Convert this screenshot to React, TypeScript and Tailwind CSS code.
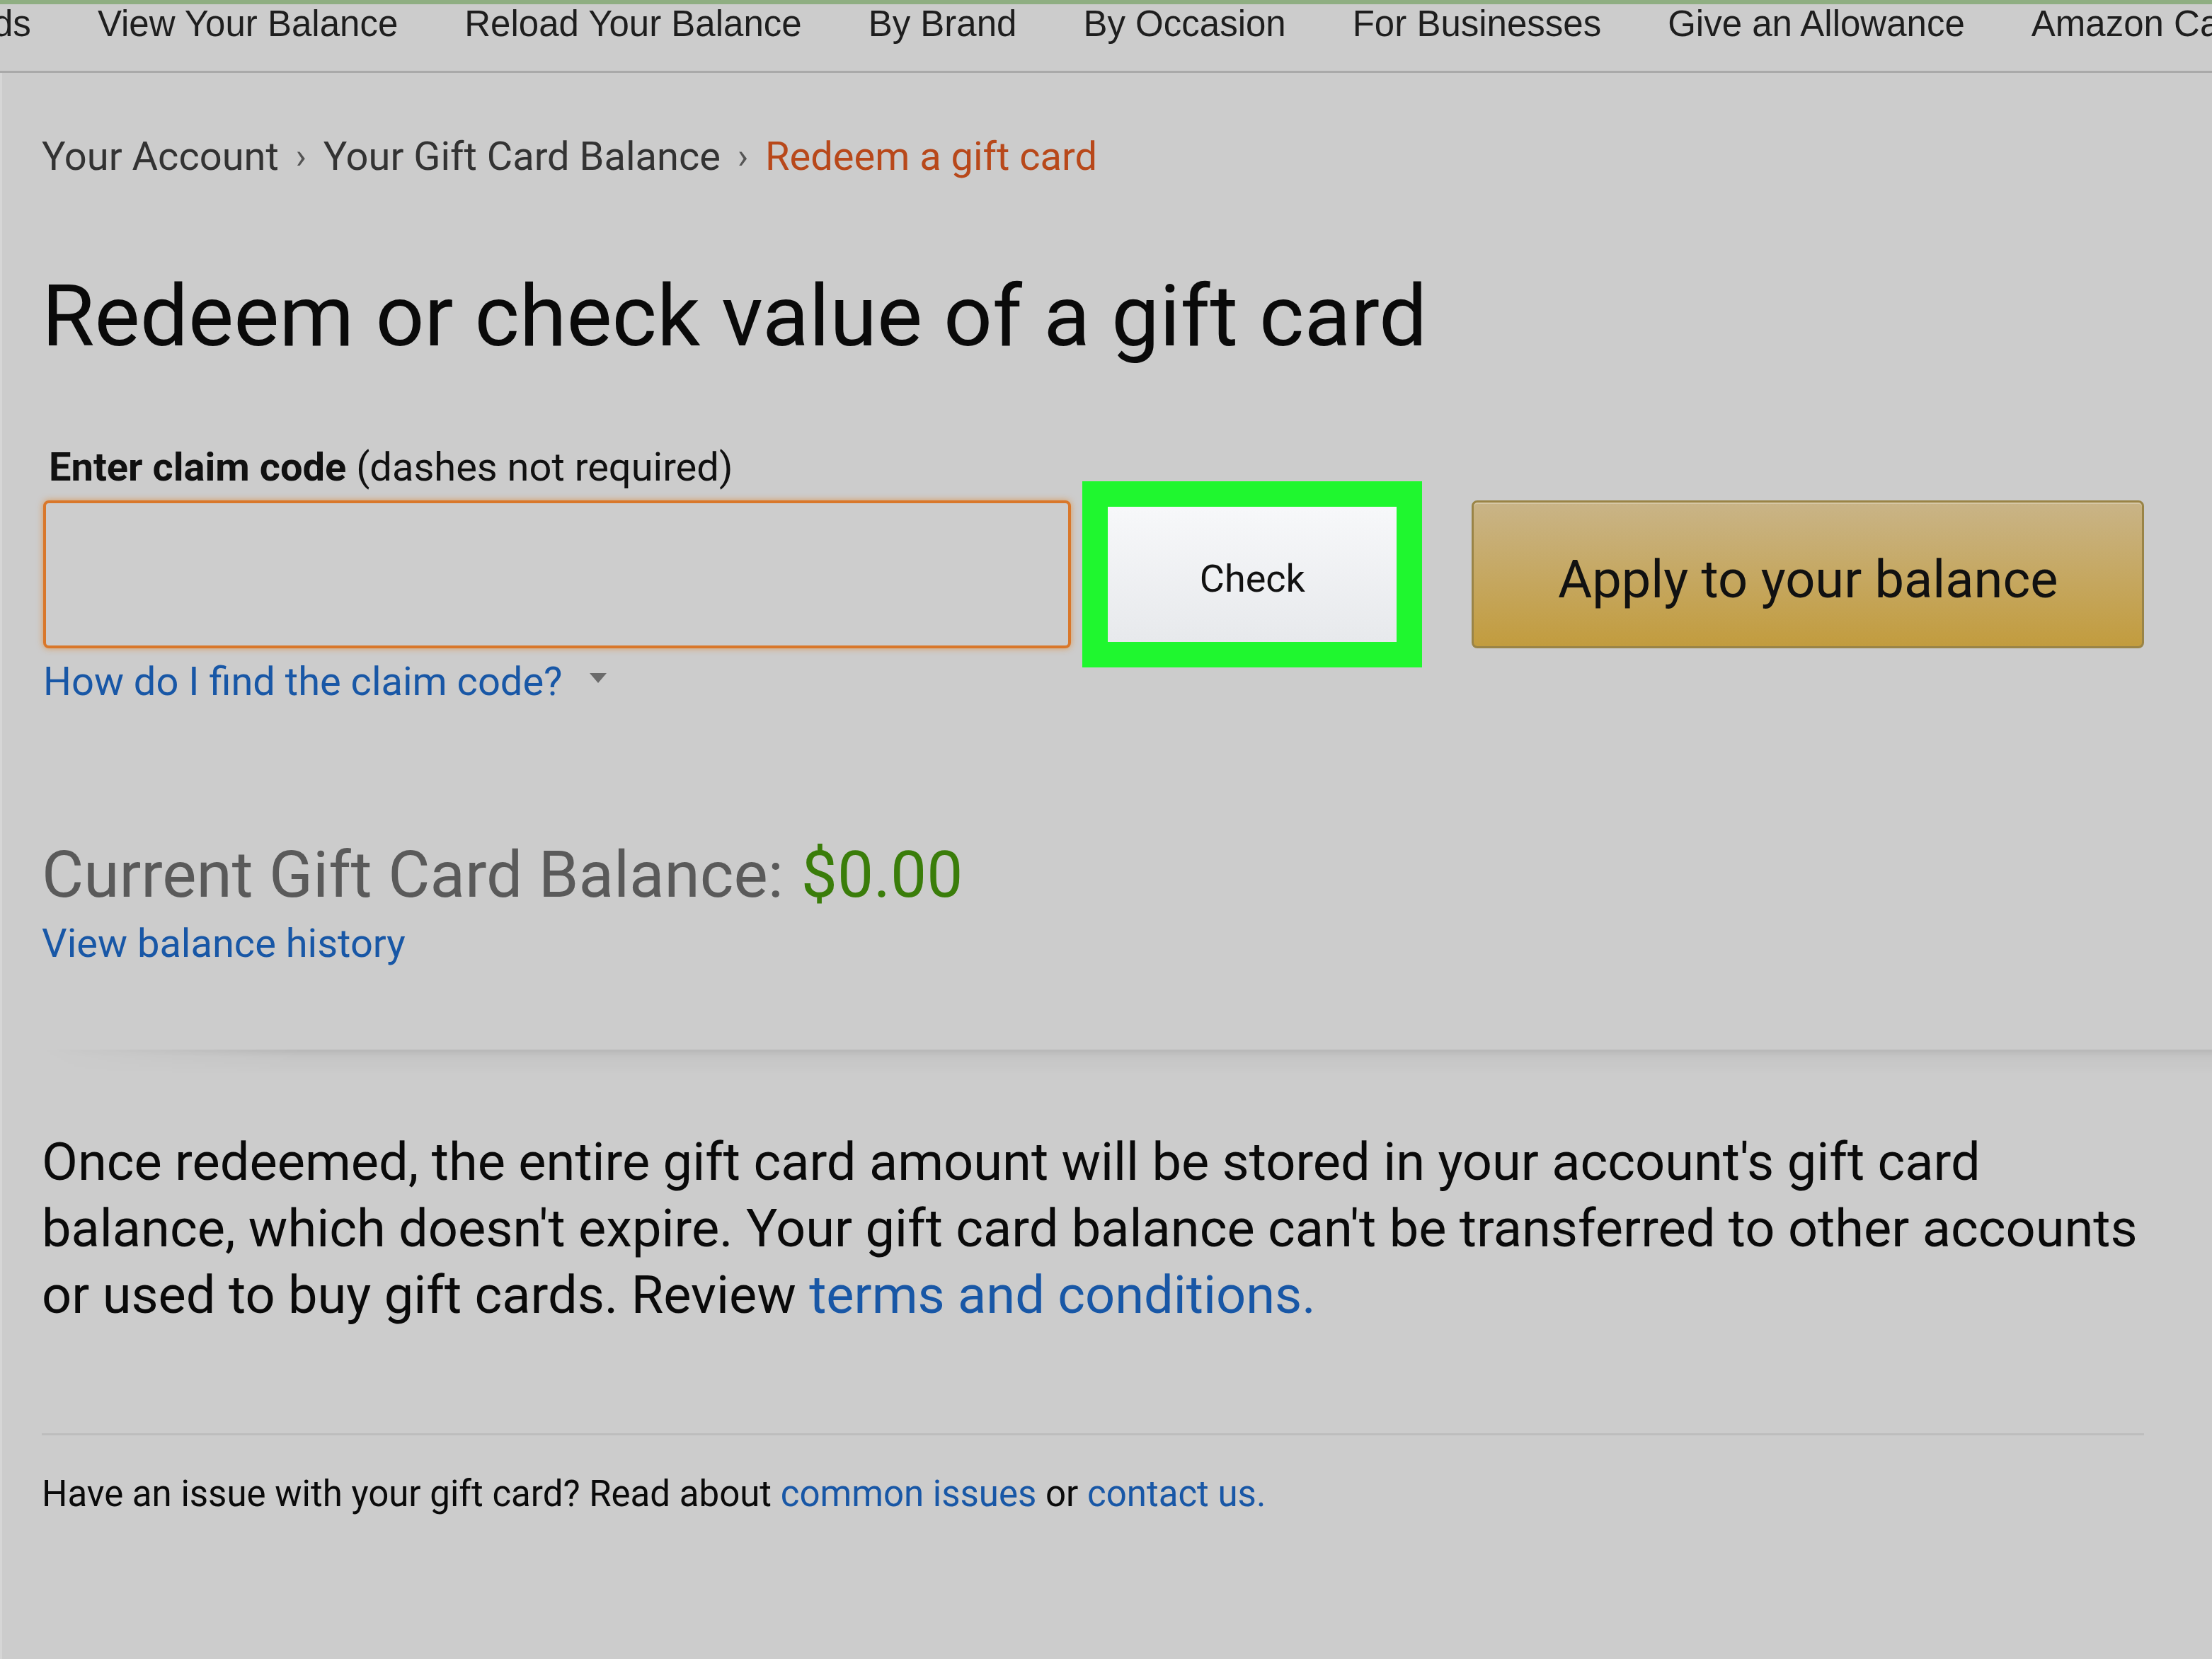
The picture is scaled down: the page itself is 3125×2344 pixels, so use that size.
import React from "react";

const navItems = [
  "ds",
  "View Your Balance",
  "Reload Your Balance",
  "By Brand",
  "By Occasion",
  "For Businesses",
  "Give an Allowance",
  "Amazon Cash",
];

function Caret() {
  return (
    <svg width="24" height="14" viewBox="0 0 24 14" className="ml-[38px] mt-[-10px]">
      <polygon points="0,0 24,0 12,14" fill="#6b6b6b" />
    </svg>
  );
}

export default function App() {
  return (
    <div className="w-[3125px] h-[2344px] bg-[#cccccc] overflow-hidden flex flex-col">
      {/* top strip */}
      <div className="h-[6px] bg-[#8fae82]" />

      {/* nav */}
      <nav className="h-[97px] border-b-[3px] border-[#a9a9a9] flex items-start pt-[3px] gap-[94px] whitespace-nowrap overflow-hidden font-['Liberation_Sans',Arial,sans-serif] text-[51px] leading-[50px] text-[#1e1e1e]">
        {navItems.map((item, i) => (
          <span key={item} className={i === 0 ? "-ml-[10px]" : ""}>
            {item}
          </span>
        ))}
      </nav>

      {/* main */}
      <main className="flex-1 flex flex-col pl-[56px] pr-[96px] border-l-[3px] border-[#d6d6d6] font-['Roboto',sans-serif] text-[#111111]">
        {/* breadcrumb */}
        <div className="mt-[88px] flex items-center text-[56px] leading-[60px] text-[#333333] whitespace-nowrap">
          <span>Your Account</span>
          <span className="mx-[24px] text-[50px] text-[#555555]">›</span>
          <span>Your Gift Card Balance</span>
          <span className="mx-[24px] text-[50px] text-[#555555]">›</span>
          <span className="text-[#b8481a]">Redeem a gift card</span>
        </div>

        <h1 className="mt-[124px] text-[121px] leading-[144px] font-normal text-[#0a0a0a] whitespace-nowrap">
          Redeem or check value of a gift card
        </h1>

        <div className="mt-[121px] ml-[10px] text-[56px] leading-[40px] whitespace-nowrap">
          <span className="font-bold">Enter claim code</span> (dashes not required)
        </div>

        {/* input row */}
        <div className="flex items-center h-[263px]">
          <div className="ml-[2px] w-[1453px] h-[209px] rounded-[8px] border-[4px] border-[#d9772a] shadow-[0_0_10px_rgba(228,121,17,0.6)] bg-[#cdcdcd]" />
          <div className="ml-[16px] w-[480px] h-[263px] border-[36px] border-[#1ff72f] bg-[linear-gradient(to_bottom,#f7f8fa,#e7e9ec)] flex items-center justify-center">
            <span className="pt-[12px] text-[54px] text-[#111111]">Check</span>
          </div>
          <button className="ml-[70px] w-[950px] h-[209px] rounded-[8px] border-[3px] border-[#9a8446] bg-[linear-gradient(to_bottom,#c9b487,#c29c3e)] shadow-[inset_0_2px_0_rgba(255,255,255,0.25)] flex items-center justify-center">
            <span className="pt-[14px] text-[74px] text-[#111111]">Apply to your balance</span>
          </button>
        </div>

        <div className="flex items-center h-[40px] ml-[2px] text-[56px] text-[#1857a6] whitespace-nowrap">
          <span>How do I find the claim code?</span>
          <Caret />
        </div>

        {/* balance */}
        <div className="mt-[203px] h-[100px] flex items-center text-[91px] whitespace-nowrap">
          <span className="text-[#5a5a5a]">Current Gift Card Balance:</span>
          <span className="ml-[25px] text-[#3a7d0a]">$0.00</span>
        </div>
        <div className="mt-[22px] h-[50px] flex items-center text-[56px] text-[#1857a6]">
          View balance history
        </div>

        {/* shaded divider */}
        <div className="mt-[125px] -mr-[96px] h-[34px] bg-[linear-gradient(to_bottom,rgba(0,0,0,0.10),rgba(0,0,0,0.03)_30%,transparent)] [mask-image:linear-gradient(to_right,transparent,black_12%,black)]" />

        <p className="mt-[78px] text-[74px] leading-[94px] text-[#0a0a0a] whitespace-nowrap">
          <span className="block">
            Once redeemed, the entire gift card amount will be stored in your account's gift card
          </span>
          <span className="block">
            balance, which doesn't expire. Your gift card balance can't be transferred to other accounts
          </span>
          <span className="block">
            or used to buy gift cards. Review <span className="text-[#1857a6]">terms and conditions.</span>
          </span>
        </p>

        <div className="mt-[148px] h-[3px] bg-[#bdbdbd]" />

        <div className="mt-[53px] h-[60px] flex items-center text-[51px] text-[#0a0a0a] whitespace-nowrap">
          <span>
            Have an issue with your gift card? Read about <span className="text-[#1857a6]">common issues</span> or{" "}
            <span className="text-[#1857a6]">contact us.</span>
          </span>
        </div>
      </main>
    </div>
  );
}
